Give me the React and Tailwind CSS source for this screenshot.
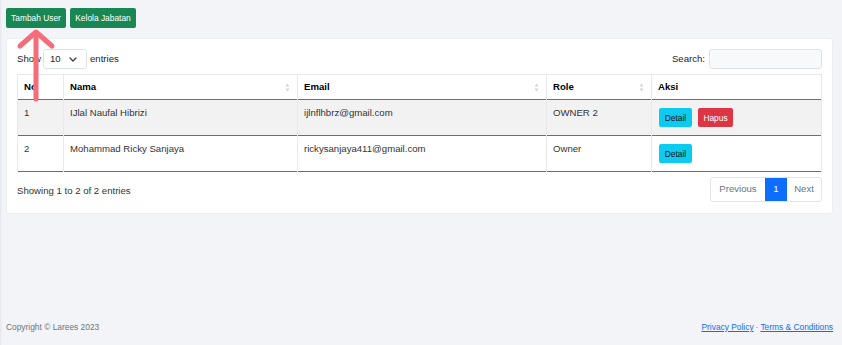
import React from 'react';

const users = [
  { no: 1, nama: 'IJlal Naufal Hibrizi', email: 'ijlnflhbrz@gmail.com', role: 'OWNER 2', hapus: true },
  { no: 2, nama: 'Mohammad Ricky Sanjaya', email: 'rickysanjaya411@gmail.com', role: 'Owner', hapus: false },
];

const SortIcon = () => (
  <svg width="5" height="9" viewBox="0 0 5 9" className="absolute right-[7px] top-[8px]">
    <path d="M2.5 0.5 L4.5 3.5 L0.5 3.5 Z" fill="#d4d4d4" />
    <path d="M2.5 8.5 L4.5 5.5 L0.5 5.5 Z" fill="#d4d4d4" />
  </svg>
);

const App = () => {
  return (
    <div
      className="relative flex min-h-[345px] w-[842px] bg-[#f3f4f7] text-[9.6px] text-[#212529]"
      style={{ fontFamily: '"Liberation Sans", Arial, sans-serif' }}
    >
      {/* sidebar edge shadow */}
      <div className="w-[3px] bg-gradient-to-r from-[#e4e5ea] to-[#f3f4f7]" />

      <div className="flex flex-1 flex-col pl-[4px] pr-[9px] pt-[8px]">
        {/* Top buttons */}
        <div className="flex gap-[4px]">
          <button className="h-[20px] w-[60px] rounded-[2px] bg-[#198754] text-[8.4px] text-white">Tambah User</button>
          <button className="h-[20px] w-[66px] rounded-[2px] bg-[#198754] text-[8.4px] text-white">Kelola Jabatan</button>
        </div>

        {/* Card */}
        <div className="mt-[10px] rounded-[3px] border border-[#eceef1] bg-white px-[10px] pb-[11px] pt-[10px]">
          <div className="flex h-[20px] items-center justify-between">
            <div className="flex items-center">
              <span>Show</span>
              <div className="ml-[2px] flex h-[20px] w-[44px] items-center justify-between rounded-[3px] border border-[#dee2e6] pl-[6px] pr-[9px]">
                <span>10</span>
                <svg width="8" height="5" viewBox="0 0 8 5">
                  <path d="M1 1 L4 4 L7 1" fill="none" stroke="#343a40" strokeWidth="1.2" strokeLinecap="round" strokeLinejoin="round" />
                </svg>
              </div>
              <span className="ml-[3px]">entries</span>
            </div>
            <div className="flex items-center">
              <span className="mr-[4px]">Search:</span>
              <div className="h-[20px] w-[113px] rounded-[3px] border border-[#dee2e6] bg-[#f8f9fb]" />
            </div>
          </div>

          {/* Table */}
          <table className="mt-[5px] w-full table-fixed border-collapse">
            <colgroup>
              <col className="w-[46px]" />
              <col className="w-[234px]" />
              <col className="w-[249px]" />
              <col className="w-[105px]" />
              <col className="w-[170px]" />
            </colgroup>
            <thead>
              <tr className="h-[25px] border-b border-[#6e6e6e] text-left font-bold text-black">
                <th className="border border-b-0 border-[#e9e9e9] px-[6px]">No</th>
                <th className="relative border border-b-0 border-[#e9e9e9] px-[6px]">Nama<SortIcon /></th>
                <th className="relative border border-b-0 border-[#e9e9e9] px-[6px]">Email<SortIcon /></th>
                <th className="relative border border-b-0 border-[#e9e9e9] px-[6px]">Role<SortIcon /></th>
                <th className="border border-b-0 border-[#e9e9e9] px-[6px]">Aksi</th>
              </tr>
            </thead>
            <tbody>
              {users.map((u, i) => (
                <tr key={u.no} className={`h-[36px] border-b border-[#6e6e6e] align-top leading-[14px] text-[#333] ${i === 0 ? 'bg-[#f2f2f2]' : 'bg-white'}`}>
                  <td className="border-x border-[#e9e9e9] px-[6px] pt-[6px]">{u.no}</td>
                  <td className="border-x border-[#e9e9e9] px-[6px] pt-[6px]">{u.nama}</td>
                  <td className="border-x border-[#e9e9e9] px-[6px] pt-[6px]">{u.email}</td>
                  <td className="border-x border-[#e9e9e9] px-[6px] pt-[6px]">{u.role}</td>
                  <td className="border-x border-[#e9e9e9] px-[7px] pt-[8px]">
                    <div className="flex gap-[6px]">
                      <button className="h-[19px] w-[33px] rounded-[2px] bg-[#0dcaf0] text-[8.4px] text-[#111]">Detail</button>
                      {u.hapus && (
                        <button className="h-[19px] w-[35px] rounded-[2px] bg-[#dc3545] text-[8.4px] text-white">Hapus</button>
                      )}
                    </div>
                  </td>
                </tr>
              ))}
            </tbody>
          </table>

          {/* Info + pagination */}
          <div className="mt-[5px] flex items-center justify-between">
            <span className="pt-[3px] text-[#333]">Showing 1 to 2 of 2 entries</span>
            <div className="flex h-[25px] overflow-hidden rounded-[3px] border border-[#e3e5e8]">
              <span className="flex w-[54px] items-center justify-center text-[#6c757d]">Previous</span>
              <span className="flex w-[22px] items-center justify-center bg-[#0d6efd] text-white">1</span>
              <span className="flex w-[34px] items-center justify-center text-[#6c757d]">Next</span>
            </div>
          </div>
        </div>

        {/* Footer */}
        <div className="mt-auto flex h-[36px] items-center justify-between text-[8.4px]">
          <span className="text-[#6c757d]">Copyright © Larees 2023</span>
          <div className="flex items-center gap-[2px] text-[#6c757d]">
            <span className="text-[#0d6efd] underline">Privacy Policy</span>
            <span>·</span>
            <span className="text-[#0d6efd] underline">Terms &amp; Conditions</span>
          </div>
        </div>
      </div>

      {/* annotation arrow */}
      <svg className="pointer-events-none absolute left-0 top-0" width="70" height="110" viewBox="0 0 70 110">
        <g stroke="#f46d79" strokeWidth="5" strokeLinecap="round" strokeLinejoin="round" fill="none">
          <path d="M36 34 L36 99" />
          <path d="M20 46 L36 32 L52 46" />
        </g>
      </svg>
    </div>
  );
};

export default App;
